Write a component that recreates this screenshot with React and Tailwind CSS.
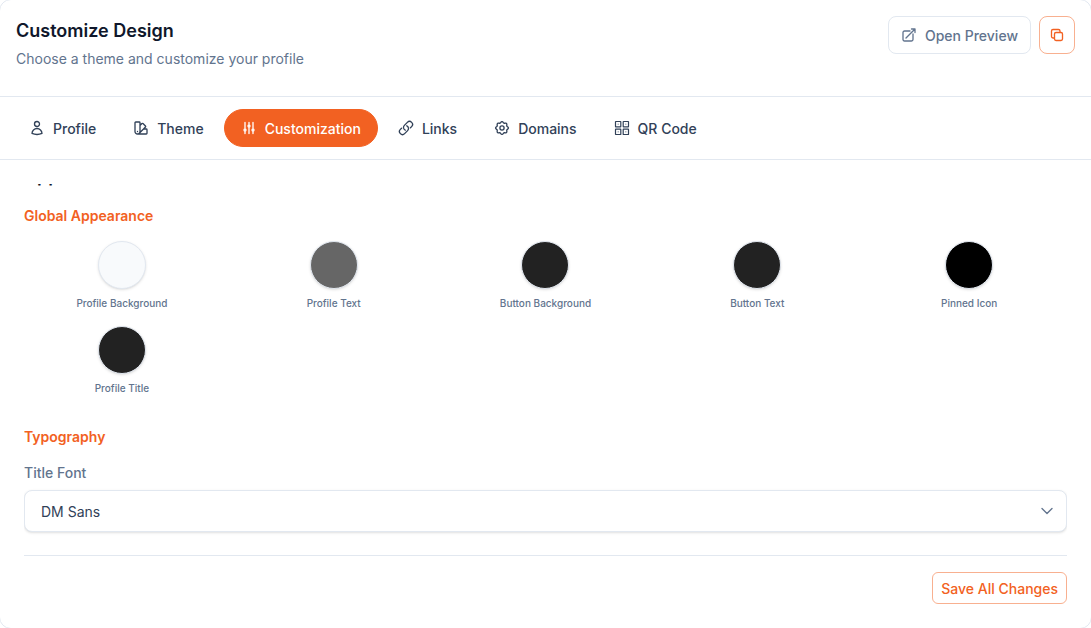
import {
  HiOutlineAdjustmentsVertical,
  HiOutlineArrowTopRightOnSquare,
  HiOutlineChevronDown,
  HiOutlineLink,
  HiOutlineSquare2Stack,
  HiOutlineSwatch,
  HiOutlineUser,
} from "react-icons/hi2";

// Four finder squares, each with a centre dot.
function QrIcon({ className }) {
  return (
    <svg viewBox="0 0 16 16" fill="none" stroke="currentColor" className={className} aria-hidden="true">
      {[1.5, 9.2].map((y) =>
        [1.5, 9.2].map((x) => (
          <g key={x + "-" + y}>
            <rect x={x} y={y} width="5.3" height="5.3" rx="0.3" strokeWidth="1.2" />
            <rect x={x + 2.2} y={y + 2.2} width="0.9" height="0.9" fill="currentColor" stroke="none" />
          </g>
        )),
      )}
    </svg>
  );
}

// Outline of a wheel with eight rounded teeth.
const gearPath =
  "M" +
  Array.from({ length: 96 }, (_, i) => {
    const a = (i / 96) * Math.PI * 2;
    const r = 5.8 + 0.6 * Math.cos(8 * a);
    return (8 + r * Math.cos(a)).toFixed(2) + " " + (8 + r * Math.sin(a)).toFixed(2);
  }).join("L") +
  "Z";

function GearIcon({ className }) {
  return (
    <svg
      viewBox="0 0 16 16"
      fill="none"
      stroke="currentColor"
      strokeWidth="1.3"
      strokeLinejoin="round"
      className={className}
      aria-hidden="true"
    >
      <path d={gearPath} />
      <circle cx="8" cy="8" r="2.1" />
    </svg>
  );
}

const tabs = [
  { label: "Profile", Icon: HiOutlineUser },
  { label: "Theme", Icon: HiOutlineSwatch },
  { label: "Customization", Icon: HiOutlineAdjustmentsVertical, active: true },
  { label: "Links", Icon: HiOutlineLink },
  { label: "Domains", Icon: GearIcon, ownStroke: true },
  { label: "QR Code", Icon: QrIcon, ownStroke: true },
];

const colors = [
  { label: "Profile Background", fill: "bg-slate-50" },
  { label: "Profile Text", fill: "bg-[#666666]" },
  { label: "Button Background", fill: "bg-[#222222]" },
  { label: "Button Text", fill: "bg-[#222222]" },
  { label: "Pinned Icon", fill: "bg-black" },
  { label: "Profile Title", fill: "bg-[#222222]" },
];

function Header() {
  return (
    <header className="flex items-start justify-between border-b border-slate-200 px-4 pt-4 pb-[27px]">
      <div>
        <h1 className="text-lg leading-[30px] font-semibold text-slate-900">Customize Design</h1>
        <p className="mt-[3px] text-sm text-slate-500">Choose a theme and customize your profile</p>
      </div>
      <div className="flex gap-2">
        <button className="flex h-[38px] items-center gap-2 rounded-lg border border-slate-200 px-3 text-sm leading-[21px] font-medium text-slate-500">
          <HiOutlineArrowTopRightOnSquare className="size-4 stroke-2" />
          Open Preview
        </button>
        <button
          aria-label="Copy link"
          className="flex h-[38px] w-9 items-center justify-center rounded-lg border border-[#f26122]/50 text-[#f26122]"
        >
          <HiOutlineSquare2Stack className="size-4 stroke-2" />
        </button>
      </div>
    </header>
  );
}

function Tabs() {
  return (
    <nav className="flex gap-[3px] border-b border-slate-200 p-3">
      {tabs.map(({ label, Icon, active, ownStroke }) => (
        <button
          key={label}
          className={
            "flex h-[38px] items-center gap-2 rounded-full border px-4 text-sm leading-[21px] font-medium " +
            (active ? "border-[#f26122] bg-[#f26122] text-white" : "border-transparent text-slate-700")
          }
        >
          <Icon className={ownStroke ? "size-4" : "size-4 stroke-2"} />
          {label}
        </button>
      ))}
    </nav>
  );
}

export default function App() {
  return (
    <div className="overflow-hidden bg-white font-['Inter',sans-serif]">
      <div className="-m-px rounded-xl border border-slate-200">
        <Header />
        <Tabs />
        <main className="p-6">
          <div className="overflow-hidden">
            <h2 className="-mt-[22px] mb-4 text-lg font-semibold text-slate-900">Appearance</h2>
            <h3 className="text-sm font-semibold text-[#f26122]">Global Appearance</h3>
            <div className="mt-[15px] grid grid-cols-5 gap-4">
              {colors.map(({ label, fill }) => (
                <button key={label} className="flex flex-col items-center gap-2">
                  <span className={"size-12 rounded-full border border-slate-200 shadow-sm " + fill} />
                  <span className="text-[10px] leading-[13px] font-medium text-slate-500">{label}</span>
                </button>
              ))}
            </div>
            <h3 className="mt-8 text-sm font-semibold text-[#f26122]">Typography</h3>
            <label htmlFor="title-font" className="mt-4 block text-sm font-medium text-slate-500">
              Title Font
            </label>
            <div className="mt-[7px] grid items-center pb-[23px]">
              <select
                id="title-font"
                className="col-start-1 row-start-1 h-[42px] w-full appearance-none rounded-lg border border-slate-200 bg-white px-4 text-sm leading-[21px] text-slate-700 shadow-sm"
              >
                <option>DM Sans</option>
              </select>
              <HiOutlineChevronDown className="pointer-events-none col-start-1 row-start-1 mr-3 size-4 stroke-2 justify-self-end text-slate-500" />
            </div>
          </div>
          <div className="flex justify-end border-t border-slate-200 pt-4">
            <button className="h-8 rounded-md border border-[#f26122]/50 px-2 text-sm leading-[21px] font-medium text-[#f26122]">
              Save All Changes
            </button>
          </div>
        </main>
      </div>
    </div>
  );
}
